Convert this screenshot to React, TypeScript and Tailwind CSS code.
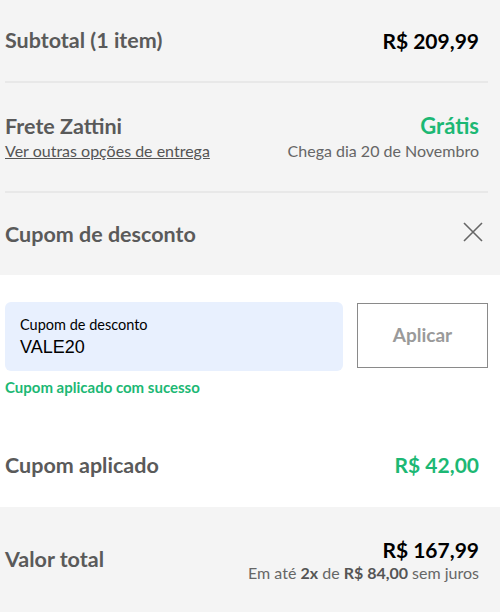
const font = { fontFamily: '"Lato", "Noto Sans", sans-serif' };

function Divider() {
  return <div className="ml-[5px] mr-[12px] h-[2px] bg-[#e8e8e8]" />;
}

export default function App() {
  return (
    <div className="w-[500px] h-[612px] bg-white text-[#555]" style={font}>
      <div className="bg-[#f4f4f4]">
        {/* Subtotal */}
        <div className="flex h-[81px] items-center justify-between pl-[5px] pr-[21px]">
          <span className="text-[21.5px] font-bold text-[#5a5a5a]">Subtotal (1 item)</span>
          <span className="text-[21px] font-bold text-black">R$ 209,99</span>
        </div>
        <Divider />
        {/* Frete */}
        <div className="flex h-[108px] items-center justify-between pl-[5px] pr-[21px]">
          <div className="flex flex-col gap-[2px]">
            <span className="text-[21.5px] font-bold leading-[26px] text-[#5a5a5a]">Frete Zattini</span>
            <a className="text-[16px] leading-[20px] underline">Ver outras opções de entrega</a>
          </div>
          <div className="flex flex-col items-end gap-[2px]">
            <span className="text-[22px] font-bold leading-[26px] text-[#1cb874]">Grátis</span>
            <span className="text-[16px] leading-[20px] text-[#666]">Chega dia 20 de Novembro</span>
          </div>
        </div>
        <Divider />
        {/* Cupom header */}
        <div className="flex h-[82px] items-center justify-between pl-[5px] pr-[16px]">
          <span className="text-[21.5px] font-bold text-[#5a5a5a]">Cupom de desconto</span>
          <svg width="22" height="22" viewBox="0 0 22 22" className="mt-[-4px]">
            <path d="M2 2 L20 20 M20 2 L2 20" stroke="#666" strokeWidth="1.6" />
          </svg>
        </div>
      </div>

      {/* Coupon form */}
      <div className="flex h-[232px] flex-col bg-white px-[5px] pt-[27px]">
        <div className="flex items-start gap-[14px] pr-[7px]">
          <div className="flex h-[69px] flex-1 flex-col justify-center rounded-[6px] bg-[#e8f0fe] px-[15px]">
            <span className="text-[14.5px] leading-[18px] text-black">Cupom de desconto</span>
            <span className="mt-[2px] text-[18px] leading-[22px] text-black" style={{ fontFamily: '"Liberation Sans", Arial, sans-serif' }}>
              VALE20
            </span>
          </div>
          <button className="mt-[1px] h-[65px] w-[131px] border border-[#8a8a8a] bg-white text-[19px] font-bold text-[#9a9a9a]">
            Aplicar
          </button>
        </div>
        <div className="mt-[6px] text-[15px] leading-[20px] font-bold text-[#1cb874]">Cupom aplicado com sucesso</div>
        <div className="flex flex-1 items-center justify-between pt-[26px] pr-[16px]">
          <span className="text-[21.5px] font-bold text-[#5a5a5a]">Cupom aplicado</span>
          <span className="text-[21px] font-bold text-[#1cb874]">R$ 42,00</span>
        </div>
      </div>

      {/* Total */}
      <div className="flex h-[105px] items-center justify-between bg-[#f4f4f4] pl-[5px] pr-[21px]">
        <span className="text-[21.5px] font-bold text-[#5a5a5a]">Valor total</span>
        <div className="flex flex-col items-end">
          <span className="text-[21px] font-bold leading-[26px] text-black">R$ 167,99</span>
          <span className="text-[16px] leading-[20px] text-[#666]">
            Em até <b className="text-[#555]">2x</b> de <b className="text-[#555]">R$ 84,00</b> sem juros
          </span>
        </div>
      </div>
    </div>
  );
}
